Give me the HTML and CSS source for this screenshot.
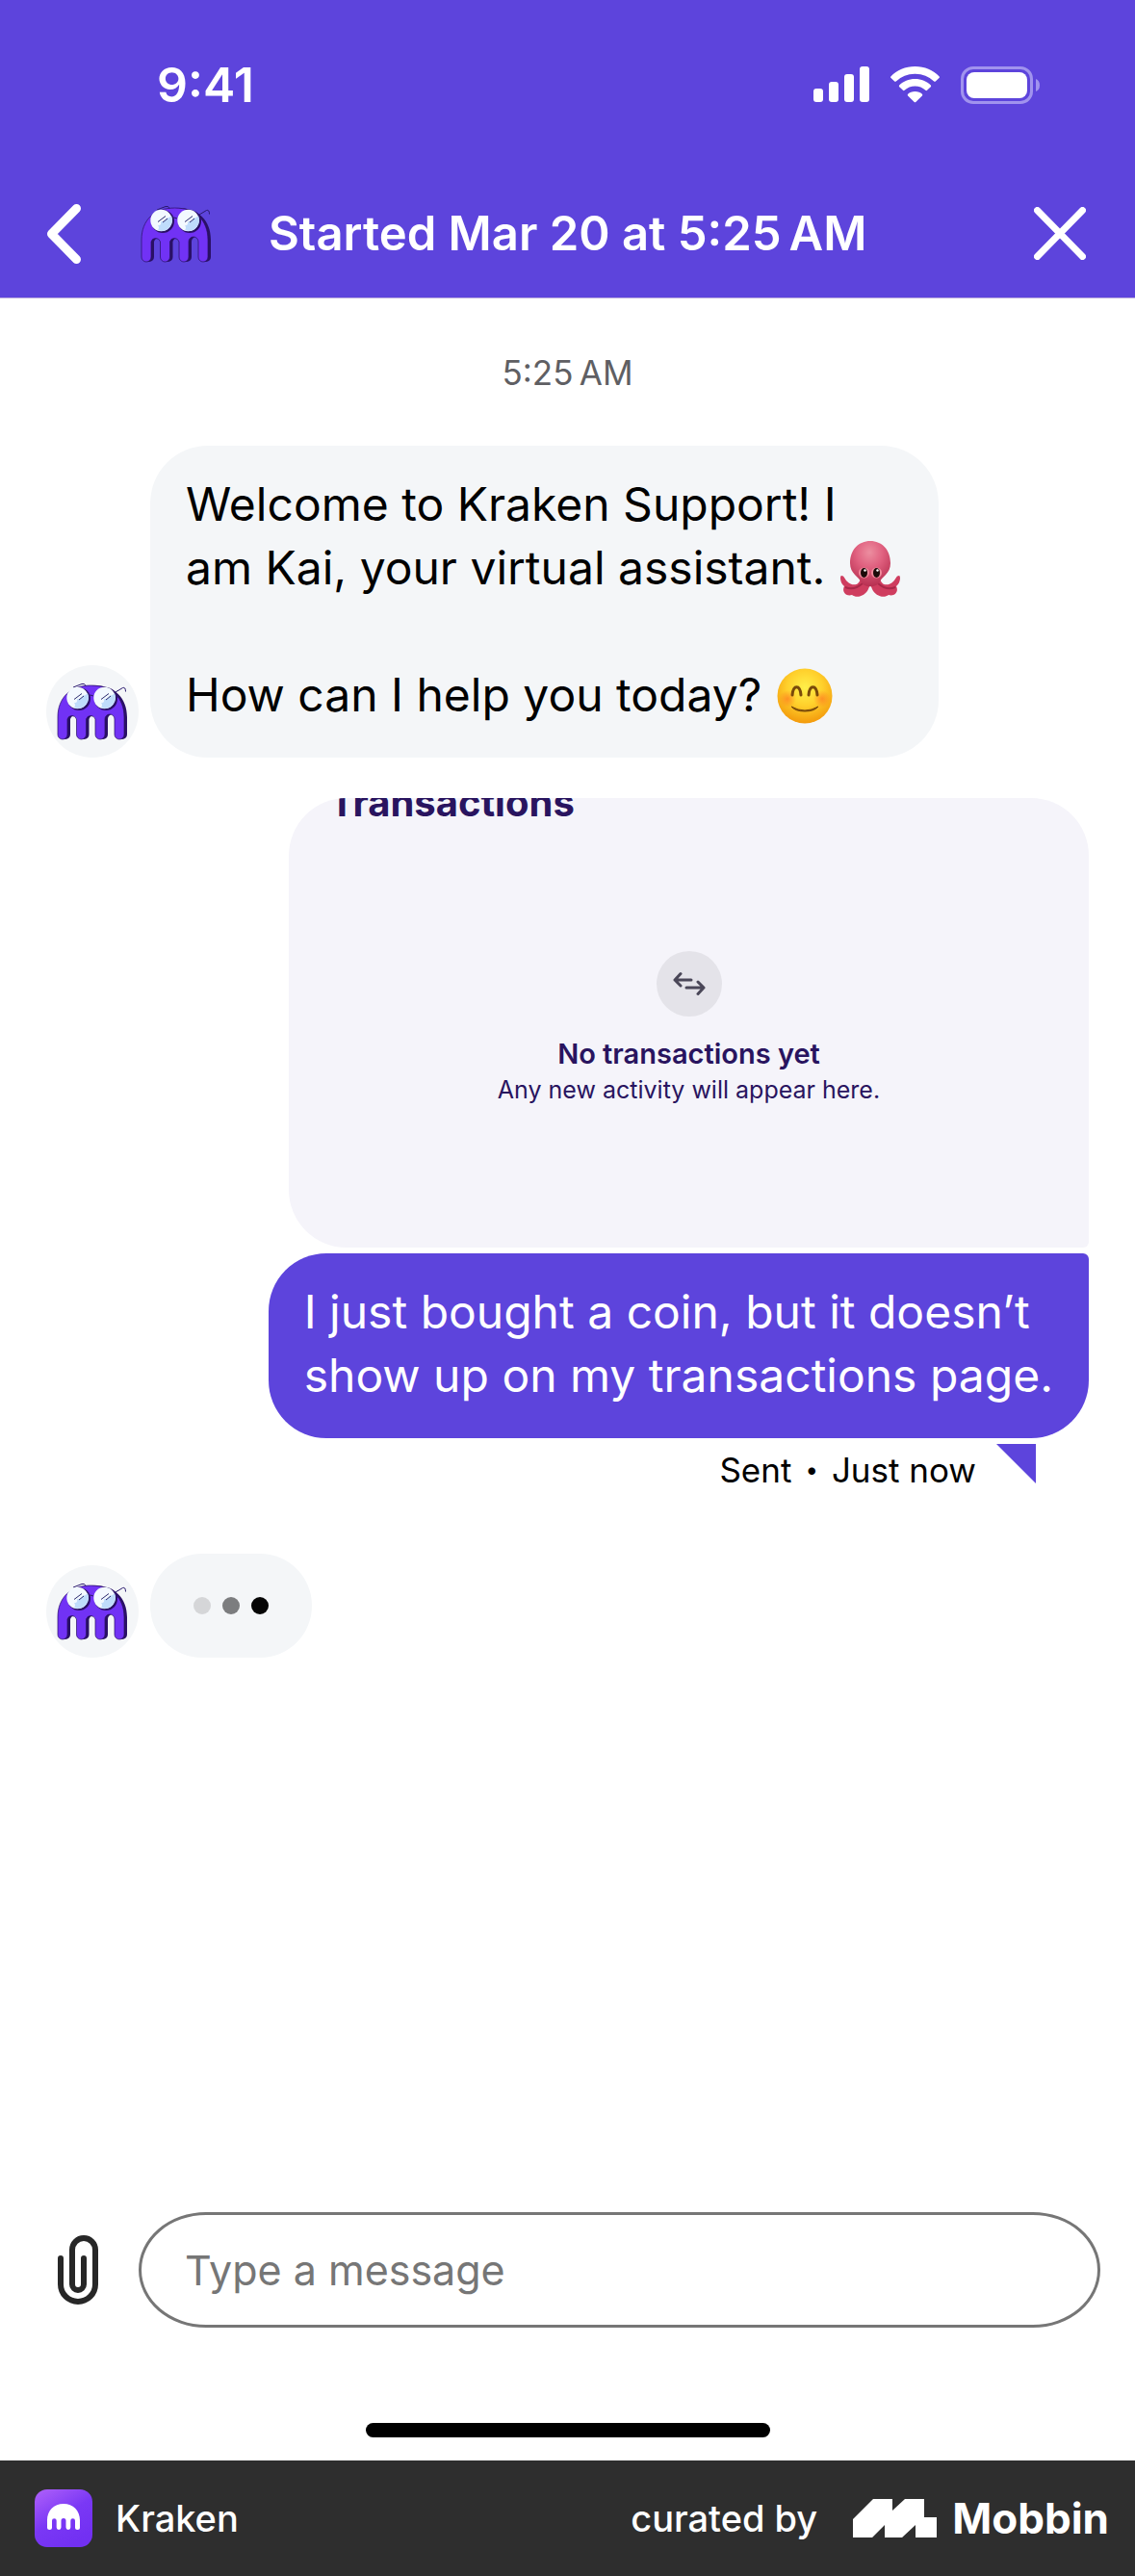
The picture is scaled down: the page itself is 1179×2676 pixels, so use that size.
FILE: index.html
```html
<!DOCTYPE html>
<html lang="en">
<head>
<meta charset="utf-8">
<meta name="viewport" content="width=device-width, initial-scale=1">
<title>Kraken Support chat</title>
<link rel="stylesheet" href="styles.css">
</head>
<body>
<svg class="defs" aria-hidden="true">
  <defs>
    <radialGradient id="smileFace" cx="50%" cy="35%" r="65%">
      <stop offset="0" stop-color="#fff04a"/>
      <stop offset=".5" stop-color="#ffd02c"/>
      <stop offset="1" stop-color="#f39a0c"/>
    </radialGradient>
    <radialGradient id="smileCheek">
      <stop offset="0" stop-color="#ff7a22" stop-opacity=".7"/>
      <stop offset="1" stop-color="#ff7a22" stop-opacity="0"/>
    </radialGradient>
    <radialGradient id="octoHead" cx="48%" cy="25%" r="75%">
      <stop offset="0" stop-color="#ec8ea0"/>
      <stop offset=".45" stop-color="#e0607f"/>
      <stop offset="1" stop-color="#b72f50"/>
    </radialGradient>
    <linearGradient id="appTile" x1="0" y1="0" x2=".6" y2="1">
      <stop offset="0" stop-color="#b061fa"/>
      <stop offset=".55" stop-color="#7a38f5"/>
      <stop offset="1" stop-color="#7230f2"/>
    </linearGradient>
    <path id="krakenBody" d="M1 36C1 16 14 3 35.500 3S70 16 70 36V54a5 5 0 0 1-10 0V38a5 5 0 0 0-10 0V54a5 5 0 0 1-10 0V38a5 5 0 0 0-9.500 0V54a5 5 0 0 1-10 0V38a5 5 0 0 0-9.500 0V54a5 5 0 0 1-10 0Z"/>
    <symbol id="kai" viewBox="0 0 74 60">
      <use href="#krakenBody" x="3" fill="#2a1066"/>
      <use href="#krakenBody" fill="#7132f5" stroke="#2a1066" stroke-width=".7"/>
      <g fill="none" stroke="#2a1a6e" stroke-width="1">
        <path d="M17 5L26 1.500q3-1 4 2"/>
        <path d="M61 10L68.500 5.500q3-1 3 4"/>
        <path d="M32 14q3-2 6 0"/>
      </g>
      <circle cx="23" cy="17" r="12" fill="#2a1066"/>
      <circle cx="51" cy="17" r="12" fill="#2a1066"/>
      <g fill="#f3f9ff">
        <circle cx="21.500" cy="16" r="11.200"/>
        <circle cx="49.500" cy="16" r="11.200"/>
      </g>
      <g fill="#bfdcfb">
        <path d="M32 11a11.200 11.200 0 0 1-14 15.200q2-3 0-5 4 0 3-4 5 0 6-3.500 3 0 5-2.700z"/>
        <path d="M60 11a11.200 11.200 0 0 1-14 15.200q2-3 0-5 4 0 3-4 5 0 6-3.500 3 0 5-2.700z"/>
      </g>
      <path d="M18 17.500l8-6M23 18l5-4M46 17.500l8-6M51 18l5-4" stroke="#2a2a6e" stroke-width="1" fill="none"/>
    </symbol>
  </defs>
</svg>

<div class="screen">
  <header class="top">
    <div class="status">
      <time class="clock">9:41</time>
      <div class="status-icons">
        <svg width="58" height="38" viewBox="0 0 58 38" fill="#fff" aria-label="Signal">
          <rect x="0" y="23" width="10" height="14" rx="3"/><rect x="16" y="16" width="10" height="21" rx="3"/>
          <rect x="32" y="8" width="10" height="29" rx="3"/><rect x="48" y="0" width="10" height="37" rx="3"/>
        </svg>
        <svg width="51" height="38" viewBox="0 0 51 38" fill="#fff" aria-label="Wi-Fi">
          <path d="M25.500 0C35.500 0 44.500 4 50.500 10.300q.8.900 0 1.700L46.800 15.500q-.8.700-1.600 0A28 28 0 0 0 25.500 7.700 28 28 0 0 0 5.800 15.500q-.8.700-1.600 0L.5 12q-.8-.8 0-1.700C6.500 4 15.500 0 25.500 0Z"/>
          <path d="M25.500 13c6.500 0 12.200 2.500 16.300 6.500q.8.900 0 1.700L38 24.800q-.8.700-1.600 0a16 16 0 0 0-21.800 0q-.8.700-1.600 0L9.200 21.200q-.8-.8 0-1.700C13.300 15.500 19 13 25.500 13Z"/>
          <path d="M25.500 26c3 0 5.600 1 7.400 2.800q.8.900 0 1.700L26.300 37q-.8.700-1.600 0L18.100 30.500q-.8-.8 0-1.700C19.900 27 22.500 26 25.500 26Z"/>
        </svg>
        <svg width="83" height="39" viewBox="0 0 83 39" aria-label="Battery">
          <rect x="1.500" y="1.500" width="72" height="36" rx="11.500" fill="none" stroke="#a193ee" stroke-width="3"/>
          <rect x="6" y="6" width="63" height="27" rx="8" fill="#fff"/>
          <path d="M78 13q4 1.500 4 6.500t-4 6.500z" fill="#a193ee"/>
        </svg>
      </div>
    </div>
    <div class="nav">
      <button class="icon-button" type="button" aria-label="Back">
        <svg width="36" height="62" viewBox="0 0 36 62" fill="none" stroke="#fff" stroke-width="9" stroke-linecap="round" stroke-linejoin="round"><path d="M31.500 4.500L5.500 31l26 26.500"/></svg>
      </button>
      <svg class="nav-kai" width="74" height="60" aria-hidden="true"><use href="#kai"/></svg>
      <h1 class="nav-title">Started Mar 20 at 5:25&#8239;AM</h1>
      <button class="icon-button" type="button" aria-label="Close">
        <svg width="54" height="55" viewBox="0 0 54 55" fill="none" stroke="#fff" stroke-width="7" stroke-linecap="round"><path d="M3.500 3.500l47 48M50.500 3.500l-47 48"/></svg>
      </button>
    </div>
  </header>

  <main class="chat">
    <p class="stamp">5:25&#8239;AM</p>

    <div class="row row-in">
      <span class="avatar"><svg width="74" height="60" aria-hidden="true"><use href="#kai"/></svg></span>
      <p class="bubble bubble-in">Welcome to Kraken Support! I<br>am Kai, your virtual assistant.
        <svg class="emoji" width="62" height="58" viewBox="0 0 62 58" role="img" aria-label="Octopus">
          <path d="M21 38C20 47 12 47 7 42 4 39 4 36 1 36-1 37 0 44 4 47 1 53 6 58 12 56 17 60 26 57 29 50L31 45 33 50C36 57 45 60 50 56 56 58 61 53 58 47 62 44 63 37 61 36 58 36 58 39 55 42 50 47 42 47 41 38Z" fill="#cf3d5f"/>
          <path d="M5 48q9 4 18-4M57 48q-9 4-18-4" fill="none" stroke="#a82848" stroke-width="2"/>
          <path d="M31 0C43 0 52 9 52 23 52 34 43 37 41 42 38 49 24 49 21 42 19 37 10 34 10 23 10 9 19 0 31 0Z" fill="url(#octoHead)"/>
          <circle cx="24.500" cy="33" r="5.500" fill="#f08a9c"/><circle cx="37.500" cy="33" r="5.500" fill="#f08a9c"/>
          <ellipse cx="24.500" cy="33" rx="3.500" ry="5" fill="#1c0b0a"/><ellipse cx="37.500" cy="33" rx="3.500" ry="5" fill="#1c0b0a"/>
          <circle cx="25.500" cy="30.500" r="1.200" fill="#fff"/><circle cx="38.500" cy="30.500" r="1.200" fill="#fff"/>
        </svg><br><br>How can I help you today?
        <svg class="emoji" width="58" height="58" viewBox="0 0 58 58" role="img" aria-label="Smiling face">
          <circle cx="29" cy="29" r="28.500" fill="url(#smileFace)"/>
          <circle cx="11" cy="32" r="9" fill="url(#smileCheek)"/><circle cx="47" cy="32" r="9" fill="url(#smileCheek)"/>
          <path d="M16 28C17 17 24 17 25 28M33 28C34 17 41 17 42 28" fill="none" stroke="#7a4a0a" stroke-width="3" stroke-linecap="round"/>
          <path d="M15 40q14 8 28 0-4 5-14 5T15 40z" fill="#7a4a0a" stroke="#7a4a0a" stroke-linejoin="round"/>
        </svg></p>
    </div>

    <div class="row-out">
      <section class="shot">
        <h2 class="shot-title">Transactions</h2>
        <div class="empty">
          <span class="empty-icon">
            <svg width="34" height="26" viewBox="0 0 34 26" fill="none" stroke="#4a4758" stroke-width="3" stroke-linecap="round" stroke-linejoin="round"><path d="M19 9H2M8 2.500L2 9 8 15M14 17H32M26 11l6 6L26 23.500"/></svg>
          </span>
          <strong class="empty-head">No transactions yet</strong>
          <span class="empty-text">Any new activity will appear here.</span>
        </div>
      </section>
      <p class="bubble bubble-out">I just bought a coin, but it doesn’t<br>show up on my transactions page.</p>
      <div class="receipt">
        <span>Sent</span>
        <span class="receipt-dot">•</span>
        <span>Just now</span>
        <svg class="receipt-tail" width="42" height="41" viewBox="0 0 42 41" aria-hidden="true"><path d="M0 0H41V41Z" fill="#5d44dc"/></svg>
      </div>
    </div>

    <div class="row row-in">
      <span class="avatar"><svg width="74" height="60" aria-hidden="true"><use href="#kai"/></svg></span>
      <div class="typing" role="status" aria-label="Kai is typing">
        <i class="dot dot-light"></i><i class="dot dot-mid"></i><i class="dot"></i>
      </div>
    </div>
  </main>

  <form class="composer">
    <button class="icon-button" type="button" aria-label="Attach a file">
      <svg width="42" height="72" viewBox="0 0 42 72" fill="none" stroke="#272727" stroke-width="6" stroke-linecap="round"><path d="M3 24V51a18 18 0 0 0 36 0V15a12 12 0 0 0-24 0V51a6 6 0 0 0 12 0V24"/></svg>
    </button>
    <input class="message" type="text" placeholder="Type a message" aria-label="Message">
  </form>
  <div class="home-bar"></div>
</div>

<footer class="credit">
  <svg width="60" height="60" viewBox="0 0 60 60" aria-hidden="true">
    <rect width="60" height="60" rx="13" fill="url(#appTile)"/>
    <path d="M13 32C13 22 20 15 30 15s17 7 17 17v7.500a2.500 2.500 0 0 1-5 0V32.500a2.300 2.300 0 0 0-4.700 0v7a2.400 2.400 0 0 1-4.800 0v-7a2.400 2.400 0 0 0-5 0v7a2.400 2.400 0 0 1-4.800 0v-7a2.300 2.300 0 0 0-4.700 0v7a2.500 2.500 0 0 1-5 0Z" fill="#fff"/>
  </svg>
  <span class="credit-app">Kraken</span>
  <span class="credit-by">curated by</span>
  <svg class="mobbin" width="87" height="40" viewBox="0 0 87 40" aria-hidden="true"><path d="M0 21L21 0H41V12L54 0H74V19H87V40H65V27L51 40H33V27L20 40H0Z" fill="#fff"/></svg>
  <span class="credit-brand">Mobbin</span>
</footer>
</body>
</html>
```
FILE: styles.css
```css
* {
  box-sizing: border-box;
}

body {
  margin: 0;
  min-height: 100vh;
  display: flex;
  flex-direction: column;
  background: #fff;
  color: #000;
  font-family: Inter, "Liberation Sans", sans-serif;
}

h1,
h2,
p {
  margin: 0;
}

svg {
  display: block;
  flex: none;
}

.defs {
  position: absolute;
  width: 0;
  height: 0;
}

.screen {
  flex: 1;
  display: flex;
  flex-direction: column;
}

/* Header */
.top {
  background: #5d44dc;
  color: #fff;
  border-bottom: 1px solid #b5a6dc;
}

.status {
  height: 176px;
  padding: 0 98px 0 163px;
  display: flex;
  align-items: center;
  justify-content: space-between;
}

.clock {
  font-size: 50px;
  font-weight: 600;
}

.status-icons {
  display: flex;
  align-items: center;
  gap: 22px;
}

.nav {
  height: 133px;
  padding: 0 51px 0 48px;
  display: flex;
  align-items: center;
}

.nav-kai {
  margin-left: 62px;
}

.nav-title {
  flex: 1;
  margin-left: 59px;
  font-size: 49px;
  font-weight: 600;
  white-space: nowrap;
}

.icon-button {
  flex: none;
  padding: 0;
  border: 0;
  background: none;
}

/* Conversation */
.chat {
  flex: 1;
  padding: 55px 48px;
}

.stamp {
  margin-bottom: 54px;
  color: #5f5f63;
  font-size: 35px;
  line-height: 44px;
  text-align: center;
}

.row {
  display: flex;
  align-items: flex-end;
  gap: 12px;
}

.avatar {
  flex: none;
  width: 96px;
  height: 96px;
  display: grid;
  place-items: center;
  border-radius: 50%;
  background: #f4f6f8;
}

.bubble {
  font-size: 48px;
  line-height: 66px;
  padding: 28px 37px 32px;
  border-radius: 60px;
}

.bubble-in {
  padding-right: 40px;
  background: #f4f6f8;
}

.emoji {
  display: inline-block;
  height: 58px;
  margin: -4px 0 -4px 2px;
  vertical-align: -9px;
}

.row-out {
  margin: 42px 0 60px;
  display: flex;
  flex-direction: column;
  align-items: flex-end;
  gap: 6px;
}

.shot {
  width: 100%;
  max-width: 831px;
  height: 467px;
  overflow: hidden;
  border-radius: 60px 60px 6px 60px;
  background: #f5f4fa;
  color: #29145f;
}

.shot-title {
  margin: -20px 42px 129px;
  padding-left: 8px;
  padding-left: 0;
  font-size: 40px;
  font-weight: 700;
  line-height: 50px;
}

.empty {
  display: flex;
  flex-direction: column;
  align-items: center;
}

.empty-icon {
  width: 68px;
  height: 68px;
  margin-bottom: 20px;
  display: grid;
  place-items: center;
  border-radius: 50%;
  background: #e4e3e9;
}

.empty-head {
  font-size: 29px;
  font-weight: 600;
  line-height: 38px;
}

.empty-text {
  font-size: 25px;
  line-height: 36px;
}

.bubble-out {
  border-radius: 60px 6px 60px 60px;
  background: #5d44dc;
  color: #fff;
}

.receipt {
  margin-right: 54px;
  display: flex;
  gap: 14px;
  font-size: 35px;
  line-height: 54px;
}

.receipt-dot {
  font-size: 24px;
}

.receipt-tail {
  margin-left: 7px;
}

.typing {
  height: 108px;
  padding: 0 45px;
  display: flex;
  align-items: center;
  gap: 12px;
  border-radius: 54px;
  background: #f4f6f8;
}

.dot {
  width: 18px;
  height: 18px;
  border-radius: 50%;
  background: #060606;
}

.dot-mid {
  background: #7c7d7f;
}

.dot-light {
  background: #d5d6d8;
}

/* Message box */
.composer {
  padding: 0 36px 0 60px;
  display: flex;
  align-items: center;
  gap: 42px;
}

.message {
  flex: 1;
  min-width: 0;
  height: 120px;
  padding: 0 45px;
  border: 3px solid #767676;
  border-radius: 70px / 60px;
  background: #fff;
  color: #000;
  font: inherit;
  font-size: 43px;
}

.message::placeholder {
  color: #767676;
  opacity: 1;
}

.home-bar {
  width: 420px;
  height: 15px;
  margin: 99px auto 24px;
  border-radius: 8px;
  background: #000;
}

/* Credit strip */
.credit {
  height: 120px;
  padding: 0 27px 0 36px;
  display: flex;
  align-items: center;
  background: #2e2e2e;
  color: #fff;
  font-size: 38px;
  font-weight: 500;
}

.credit-app {
  margin-left: 24px;
}

.credit-by {
  margin-left: auto;
}

.mobbin {
  margin: 0 16px 0 37px;
}

.credit-brand {
  font-size: 44px;
  font-weight: 700;
}
```
